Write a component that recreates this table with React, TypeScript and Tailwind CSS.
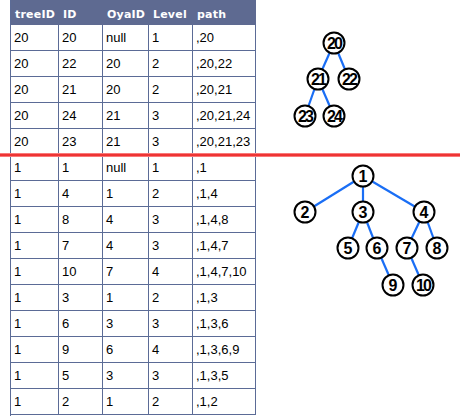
import React from "react";

const rows: string[][] = [
  ["20", "20", "null", "1", ",20"],
  ["20", "22", "20", "2", ",20,22"],
  ["20", "21", "20", "2", ",20,21"],
  ["20", "24", "21", "3", ",20,21,24"],
  ["20", "23", "21", "3", ",20,21,23"],
  ["1", "1", "null", "1", ",1"],
  ["1", "4", "1", "2", ",1,4"],
  ["1", "8", "4", "3", ",1,4,8"],
  ["1", "7", "4", "3", ",1,4,7"],
  ["1", "10", "7", "4", ",1,4,7,10"],
  ["1", "3", "1", "2", ",1,3"],
  ["1", "6", "3", "3", ",1,3,6"],
  ["1", "9", "6", "4", ",1,3,6,9"],
  ["1", "5", "3", "3", ",1,3,5"],
  ["1", "2", "1", "2", ",1,2"],
];

const headers = ["treeID", "ID", "OyaID", "Level", "path"];
const widths = ["w-[48px]", "w-[44px]", "w-[46px]", "w-[44px]", "w-[63px]"];

type N = { id: string; x: number; y: number };

const topNodes: N[] = [
  { id: "20", x: 334, y: 43 },
  { id: "21", x: 318, y: 79 },
  { id: "22", x: 349, y: 79 },
  { id: "23", x: 305, y: 116 },
  { id: "24", x: 334, y: 116 },
];
const topEdges = [
  ["20", "21"],
  ["20", "22"],
  ["21", "23"],
  ["21", "24"],
];

const botNodes: N[] = [
  { id: "1", x: 363, y: 176 },
  { id: "2", x: 305, y: 212 },
  { id: "3", x: 363, y: 212 },
  { id: "4", x: 424, y: 212 },
  { id: "5", x: 348, y: 248 },
  { id: "6", x: 377, y: 248 },
  { id: "7", x: 407, y: 248 },
  { id: "8", x: 437, y: 248 },
  { id: "9", x: 393, y: 285 },
  { id: "10", x: 423, y: 285 },
];
const botEdges = [
  ["1", "2"],
  ["1", "3"],
  ["1", "4"],
  ["3", "5"],
  ["3", "6"],
  ["4", "7"],
  ["4", "8"],
  ["6", "9"],
  ["7", "10"],
];

function Tree({ nodes, edges }: { nodes: N[]; edges: string[][] }) {
  const m: Record<string, N> = {};
  nodes.forEach((n) => (m[n.id] = n));
  return (
    <g>
      {edges.map(([a, b]) => (
        <line
          key={a + "-" + b}
          x1={m[a].x}
          y1={m[a].y}
          x2={m[b].x}
          y2={m[b].y}
          stroke="#1a6ef5"
          strokeWidth={2.2}
        />
      ))}
      {nodes.map((n) => (
        <g key={n.id}>
          <circle cx={n.x} cy={n.y} r={10.5} fill="#fff" stroke="#000" strokeWidth={2} />
          <text
            x={n.x}
            y={n.y + 5.8}
            textAnchor="middle"
            fontFamily="'Liberation Sans', Arial, sans-serif"
            fontWeight="bold"
            fontSize={16}
            letterSpacing={n.id.length > 1 ? -1.8 : 0}
            fill="#000"
          >
            {n.id}
          </text>
        </g>
      ))}
    </g>
  );
}

export default function App() {
  return (
    <div className="relative w-[460px] h-[416px] bg-white overflow-hidden">
      <div className="flex">
        <div className="ml-[10px] w-[246px] border-l border-[#5b6b96]">
          <div className="flex h-[25px] bg-[#5e6a91]">
            {headers.map((h, i) => (
              <div
                key={h}
                className={`${widths[i]} pl-[4px] pt-[8px] text-white font-bold text-[11px] leading-[13px] tracking-[0.2px]`}
                style={{ fontFamily: "'DejaVu Sans', Verdana, sans-serif" }}
              >
                {h}
              </div>
            ))}
          </div>
          {rows.map((r, ri) => (
            <div key={ri} className="flex h-[26px] border-b border-[#5b6b96]">
              {r.map((c, ci) => (
                <div
                  key={ci}
                  className={`${widths[ci]} border-r border-[#5b6b96] pl-[3px] flex items-center text-[13px] text-black`}
                  style={{ fontFamily: "'Liberation Sans', Arial, sans-serif" }}
                >
                  {c}
                </div>
              ))}
            </div>
          ))}
        </div>
        <svg width={204} height={416} viewBox="256 0 204 416">
          <Tree nodes={topNodes} edges={topEdges} />
          <Tree nodes={botNodes} edges={botEdges} />
        </svg>
      </div>
      <div className="absolute left-0 top-[153px] w-[460px] h-[4px] bg-[linear-gradient(#ff9f9f,#ee3434_35%,#ee3434_65%,#ff9f9f)]" />
    </div>
  );
}
